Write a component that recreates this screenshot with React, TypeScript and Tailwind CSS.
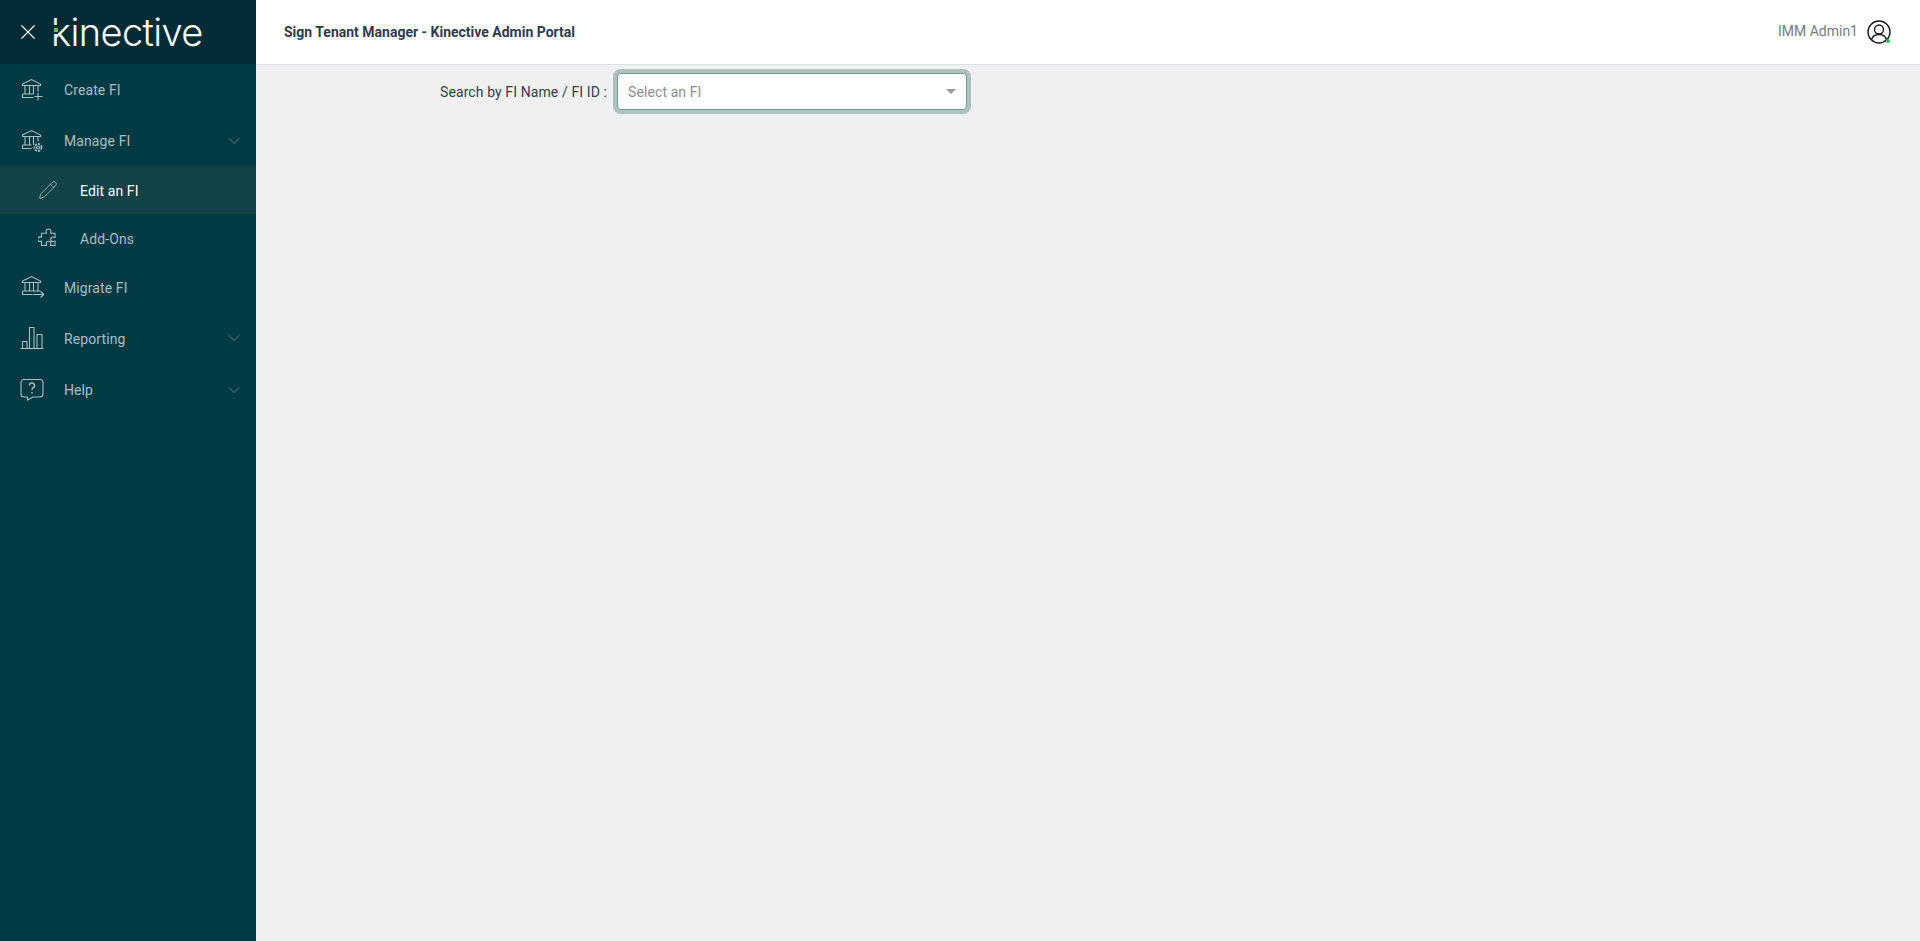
import { ChevronDown, Pencil, X } from "lucide-react";

const BankTop = () => (
    <>
        <path d="M2.500 6 11.500 1.500 20.500 6v1.500h-18z" />
        <path d="M5 7.500v8.500M9.500 7.500v8.500M13.500 7.500v8.500" />
    </>
);

const BankPlus = () => (
    <svg width="24" height="24" viewBox="0 0 24 24" fill="none" stroke="currentColor" strokeWidth="1.100">
        <BankTop />
        <path d="M18 7.500v6M2.500 16h11M2.500 16v3.500h11" />
        <path d="M18 15v7.500M14.500 18.500h8" />
    </svg>
);

const BankGear = () => (
    <svg width="24" height="24" viewBox="0 0 24 24" fill="none" stroke="currentColor" strokeWidth="1.100">
        <BankTop />
        <path d="M18 7.500v5M2.500 16h9M2.500 16v3.500h9" />
        <circle cx="18" cy="18.500" r="1.500" />
        <circle cx="18" cy="18.500" r="3.600" strokeDasharray="2.200 1.100" strokeWidth="1.700" />
    </svg>
);

const BankArrow = () => (
    <svg width="24" height="24" viewBox="0 0 24 24" fill="none" stroke="currentColor" strokeWidth="1.100">
        <BankTop />
        <path d="M18 7.500v8.500M2.500 16h18M2.500 16v3.500h10" />
        <path d="M13 19.500h11M20.500 16.500l3.500 3-3.500 3" />
    </svg>
);

const Bars = () => (
    <svg width="24" height="24" viewBox="0 0 24 24" fill="none" stroke="currentColor" strokeWidth="1.100">
        <path d="M0.500 22.500h23" />
        <path d="M2.500 22.500v-7h4.500v7" />
        <path d="M9.500 22.500V1.500h4.500v21" />
        <path d="M17 22.500V8.500h5v14" />
    </svg>
);

const HelpBubble = () => (
    <svg width="24" height="24" viewBox="0 0 24 24" fill="none" stroke="currentColor" strokeWidth="1.100">
        <path d="M4 1.500h16A3 3 0 0 1 23 4.500v11.500a3 3 0 0 1-3 3h-7l-5.500 3v-3H4a3 3 0 0 1-3-3V4.500a3 3 0 0 1 3-3z" />
        <path d="M9.500 7.500a2.500 2.500 0 1 1 3.600 2.200c-.8.500-1.100 1-1.100 2.300M12 14v1.400" strokeWidth="1.400" />
    </svg>
);

const PuzzlePiece = () => (
    <svg width="20" height="20" viewBox="0 0 20 20" fill="none" stroke="currentColor" strokeWidth="1.100">
        <path d="M8 3.500a2.500 2.500 0 0 1 5 0c0 .8-.4 1.200-.4 1.800h4.400v4.200c-.7 0-1.200-.5-2-.5a2.300 2.300 0 0 0 0 4.600c.8 0 1.300-.5 2-.5v4.400h-4.500c0-.7.400-1.100.4-1.800a2.400 2.400 0 0 0-4.800 0c0 .7.400 1.100.4 1.800H3.500v-4.400c-.6 0-1 .4-1.600.4a2.300 2.300 0 0 1 0-4.600c.6 0 1 .4 1.600.4V5.300h4.900C8.400 4.700 8 4.300 8 3.500z" />
    </svg>
);

const NavRow = ({ icon, label, chevron, className }: { icon: React.ReactNode; label: string; chevron?: boolean; className: string }) => (
    <div className={`flex items-center pl-[20px] pr-3 text-[#a9bfc1] ${className}`}>
        <span className="flex w-6 h-6 mr-[20px] shrink-0">{icon}</span>
        <span className="flex-1 pt-[2px] text-[14px] tracking-[0.1px]">{label}</span>
        {chevron && <ChevronDown size={20} strokeWidth={1} className="text-[#6f9094]" />}
    </div>
);

const SubRow = ({ icon, label, active }: { icon: React.ReactNode; label: string; active?: boolean }) => (
    <div className={`flex items-center h-12 pl-[38px] text-[14px] tracking-[0.1px] ${active ? "bg-[#114246] text-white" : "text-[#a9bfc1]"}`}>
        <span className="flex w-5 text-[#a9bfc1] mr-[22px]">{icon}</span>
        <span className="pt-[2px]">{label}</span>
    </div>
);

const Logo = () => (
    <div className="relative flex items-center h-[38px] text-white text-[38px] font-light leading-none tracking-[-0.6px] font-['Inter',sans-serif]">
        <span>kinective</span>
        <span className="absolute left-[1px] top-[12px] flex items-center justify-end w-[6px] h-[9px] bg-[#012c35]">
            <span className="w-[4px] h-[4px] bg-[#6cc24a]" />
        </span>
    </div>
);

export default function App() {
    return (
        <div className="flex h-[941px] bg-[#f0f0f0] font-['Roboto',sans-serif]">
            <aside className="w-[256px] shrink-0 bg-[#013a42]">
                <div className="flex items-center h-[64px] bg-[#012c35] pl-[15px] text-white">
                    <X size={26} strokeWidth={1} className="mr-[10px]" />
                    <Logo />
                </div>
                <NavRow icon={<BankPlus />} label="Create FI" className="h-[51px]" />
                <NavRow icon={<BankGear />} label="Manage FI" chevron className="h-[51px]" />
                <SubRow icon={<Pencil size={20} strokeWidth={1} />} label="Edit an FI" active />
                <SubRow icon={<PuzzlePiece />} label="Add-Ons" />
                <NavRow icon={<BankArrow />} label="Migrate FI" className="h-[50px]" />
                <NavRow icon={<Bars />} label="Reporting" chevron className="h-[52px]" />
                <NavRow icon={<HelpBubble />} label="Help" chevron className="h-[51px]" />
            </aside>
            <div className="flex-1 flex flex-col">
                <header className="flex items-center justify-between h-[65px] bg-white border-b border-[#dcdfe3] pl-[28px] pr-[29px]">
                    <h1 className="text-[14px] font-bold text-[#2f3b4c]">Sign Tenant Manager - Kinective Admin Portal</h1>
                    <div className="flex items-center gap-[9px] text-[14px] text-[#757b85]">
                        <span className="pb-[2px]">IMM Admin1</span>
                        <span className="relative flex">
                            <svg width="24" height="24" viewBox="0 0 24 24" fill="none" stroke="#1a1a1a" strokeWidth="1.400">
                                <circle cx="12" cy="12" r="11" />
                                <circle cx="12" cy="9.500" r="4.500" />
                                <path d="M4.500 20c.8-4 3.800-5.500 7.500-5.500s6.700 1.500 7.500 5.500" />
                            </svg>
                            <span className="absolute right-[1px] bottom-[1px] w-[4px] h-[4px] rounded-full bg-[#22c55e]" />
                        </span>
                    </div>
                </header>
                <main className="flex items-center pt-[8px] pl-[184px]">
                    <label className="text-[14px] tracking-[0.1px] text-[#33404f] mr-[10px] pt-[1px]">Search by FI Name / FI ID :</label>
                    <div className="flex items-center justify-between w-[350px] h-[37px] bg-white border border-[#6f9c8c] rounded-[4px] pl-[10px] pr-[10px] text-[14px] tracking-[0.1px] text-[#8f8f8f] shadow-[0_0_0_4px_#aec2c0]">
                        <span className="pt-[1px]">Select an FI</span>
                        <span className="w-0 h-0 border-x-[5px] border-x-transparent border-t-[5px] border-t-[#999]" />
                    </div>
                </main>
            </div>
        </div>
    );
}
